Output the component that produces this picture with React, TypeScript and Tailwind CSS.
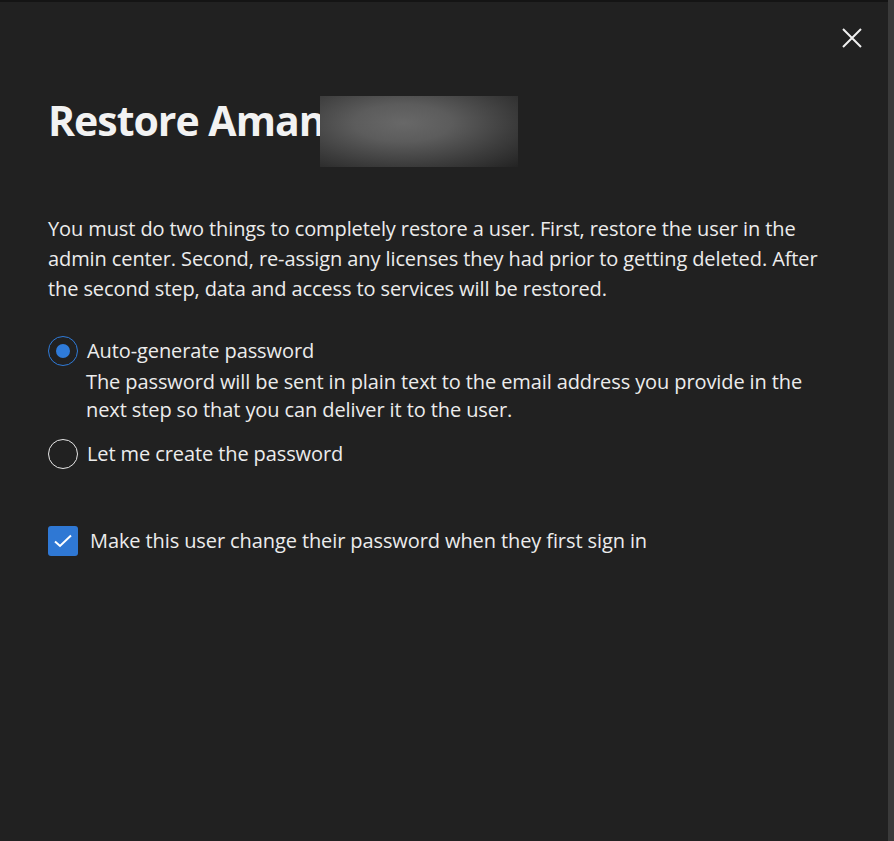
import { useState } from "react";

const font = { fontFamily: '"Open Sans", "Noto Sans", sans-serif' };

function Radio({ checked }: { checked: boolean }) {
  return (
    <span
      className={`flex h-[30px] w-[30px] shrink-0 items-center justify-center rounded-full border-[1.5px] ${
        checked ? "border-[#2f7bd9]" : "border-[#e6e6e6]"
      }`}
    >
      {checked && <span className="h-[14px] w-[14px] rounded-full bg-[#2f7bd9]" />}
    </span>
  );
}

export default function App() {
  const [mode, setMode] = useState<"auto" | "manual">("auto");
  const [forceChange, setForceChange] = useState(true);

  return (
    <div className="flex h-[841px] w-[894px] bg-[#212121] text-[#ececec]" style={font}>
      <div className="flex flex-1 flex-col">
        <div className="h-[2px] bg-[#141414]" />

        {/* Close */}
        <div className="flex justify-end pr-[26px] pt-[26px]">
          <button className="flex h-[20px] w-[20px] items-center justify-center text-[#f0f0f0]">
            <svg width="20" height="20" viewBox="0 0 20 20" fill="none" stroke="currentColor" strokeWidth="2">
              <path d="M1 1L19 19M19 1L1 19" />
            </svg>
          </button>
        </div>

        <div className="pl-12 pr-[42px]">
          {/* Heading */}
          <div className="mt-[40px] flex items-start">
            <h1 className="pt-[2px] text-[41px] font-bold leading-[60px] tracking-[-1px] text-[#f2f2f2]">
              Restore Aman
            </h1>
            <div className="-ml-[5px] mt-[8px] h-[71px] w-[198px] bg-[radial-gradient(ellipse_at_42%_38%,#686868_0%,#5c5c5c_30%,#3c3c3c_68%,#232323_100%)]" />
          </div>

          <p className="mt-[47px] text-[20px] leading-[30px] tracking-[-0.1px]">
            You must do two things to completely restore a user. First, restore the user in the admin center. Second,
            re-assign any licenses they had prior to getting deleted. After the second step, data and access to services
            will be restored.
          </p>

          {/* Password options */}
          <div className="mt-[32px] flex flex-col">
            <label className="flex cursor-pointer items-center gap-[9px]" onClick={() => setMode("auto")}>
              <Radio checked={mode === "auto"} />
              <span className="text-[20px] leading-[30px] tracking-[-0.1px]">Auto-generate password</span>
            </label>
            <p className="ml-[38px] mt-[2px] text-[20px] leading-[28px] tracking-[-0.1px]">
              The password will be sent in plain text to the email address you provide in the next step so that you can
              deliver it to the user.
            </p>
            <label className="mt-[15px] flex cursor-pointer items-center gap-[9px]" onClick={() => setMode("manual")}>
              <Radio checked={mode === "manual"} />
              <span className="text-[20px] leading-[30px] tracking-[-0.1px]">Let me create the password</span>
            </label>
          </div>

          <label
            className="mt-[57px] flex cursor-pointer items-center gap-[12px]"
            onClick={() => setForceChange(!forceChange)}
          >
            <span
              className={`flex h-[30px] w-[30px] items-center justify-center rounded-[3px] ${
                forceChange ? "bg-[#2f78d4]" : "border-[1.5px] border-[#e6e6e6]"
              }`}
            >
              {forceChange && (
                <svg width="20" height="20" viewBox="0 0 20 20" fill="none" stroke="#fff" strokeWidth="2">
                  <path d="M2 10.5L7 15L18 4.5" />
                </svg>
              )}
            </span>
            <span className="text-[20px] leading-[30px] tracking-[-0.1px]">
              Make this user change their password when they first sign in
            </span>
          </label>
        </div>
      </div>
      <div className="w-[6px] bg-[#3a3a3a]" />
    </div>
  );
}
